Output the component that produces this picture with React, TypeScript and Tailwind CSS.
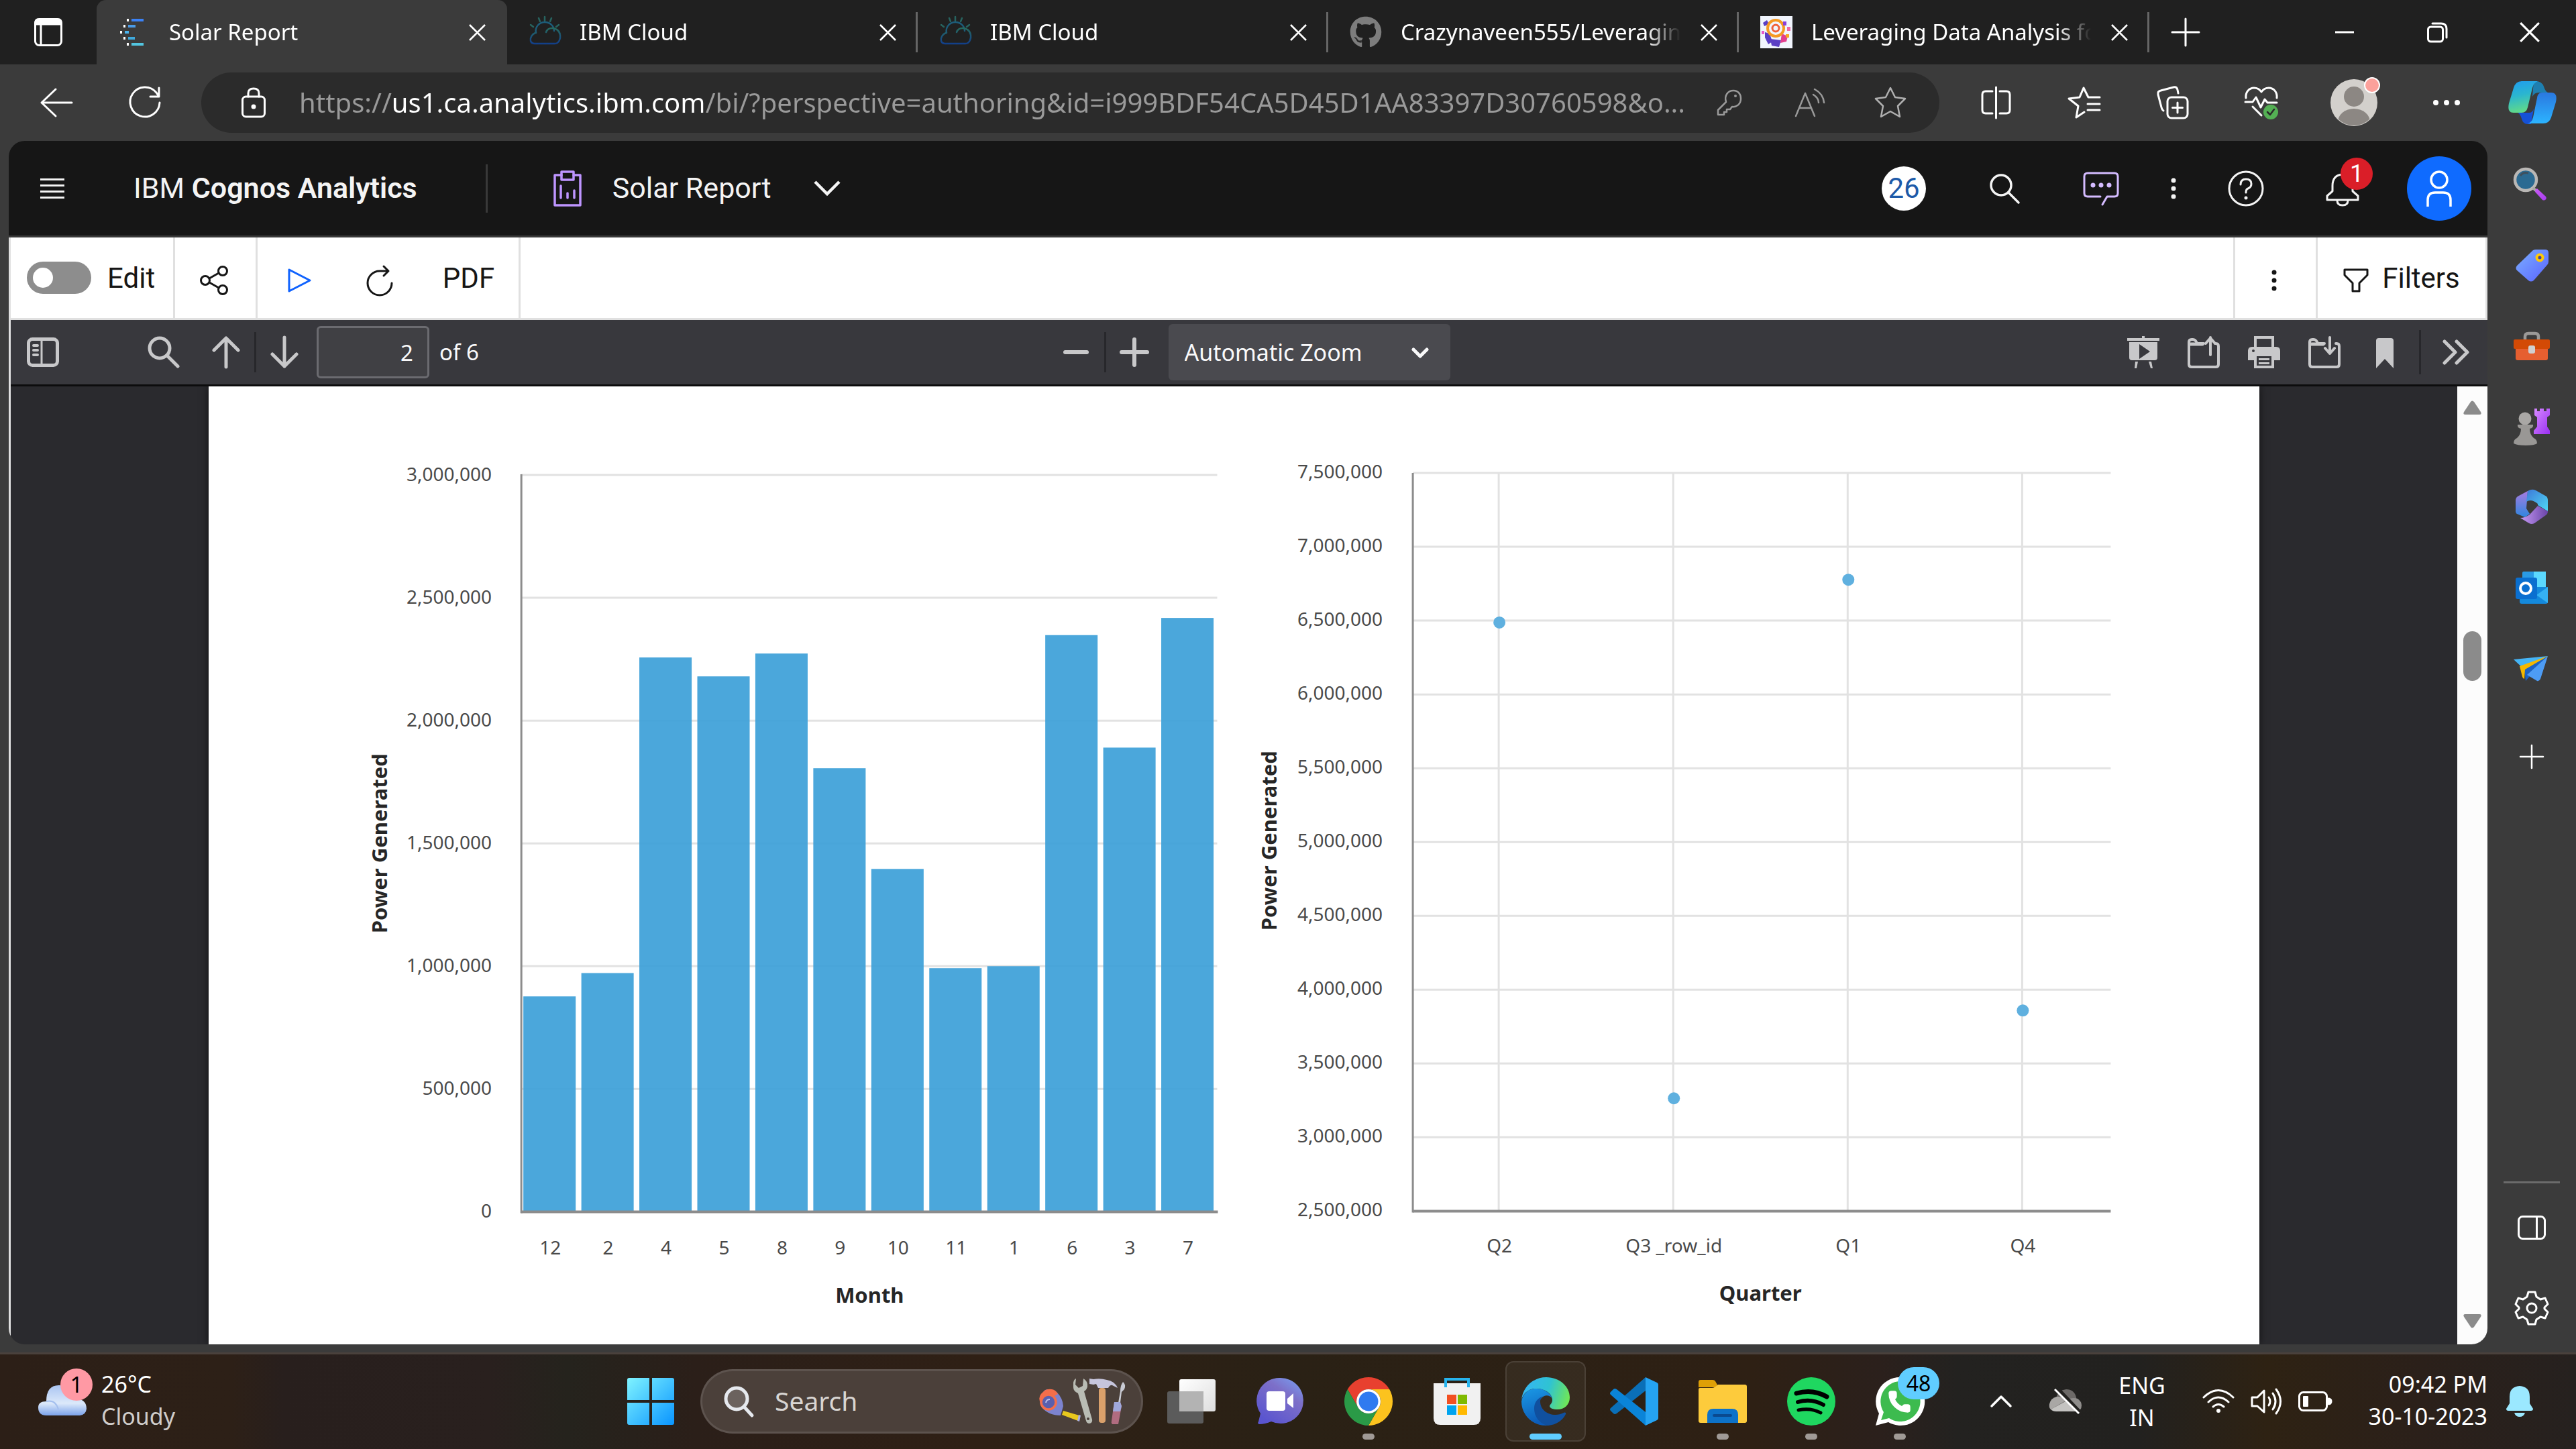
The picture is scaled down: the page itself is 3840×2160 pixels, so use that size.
import React from "react";
import { FaGithub } from "react-icons/fa";
import { Phone } from "lucide-react";

type Kids = { children?: React.ReactNode };

/* Line icon drawn in its own pixel grid */
function Line({ w, h, s = 3, c = "", children }: Kids & { w: number; h: number; s?: number; c?: string }) {
  return (
    <svg width={w} height={h} viewBox={`0 0 ${w} ${h}`} fill="none" stroke="currentColor" strokeWidth={s} strokeLinecap="round" strokeLinejoin="round" className={`shrink-0 overflow-visible ${c}`} aria-hidden="true">
      {children}
    </svg>
  );
}

/* Filled icon */
function Art({ w, h, c = "", children }: Kids & { w: number; h: number; c?: string }) {
  return (
    <svg width={w} height={h} viewBox={`0 0 ${w} ${h}`} fill="currentColor" className={`shrink-0 overflow-visible ${c}`} aria-hidden="true">
      {children}
    </svg>
  );
}

function Btn({ label, c = "", children }: Kids & { label: string; c?: string }) {
  return (
    <button type="button" aria-label={label} className={`flex shrink-0 items-center justify-center ${c}`}>
      {children}
    </button>
  );
}

const starPath = "M24 2 L31 16 L46 18 L35 29 L38 45 L24 37 L10 45 L13 29 L2 18 L17 16 Z";

/* ---------------------------------------------------------------- tabs */

const CognosFavicon = () => (
  <Art w={48} h={48}>
    {[
      [13, 4, 28, "#3b82f6"],
      [8, 13, 21, "#4a9be8"],
      [3, 22, 16, "#4ab5f0"],
      [8, 31, 20, "#3fa9dc"],
      [13, 40, 28, "#52c5e0"],
    ].map(([x, y, w, f]) => (
      <g key={y as number}>
        <rect x={x} y={y} width={3} height={4} fill="#fff" />
        <rect x={(x as number) + 7} y={y} width={(w as number) - 10} height={4} fill={f as string} />
      </g>
    ))}
  </Art>
);

const CloudFavicon = () => (
  <Line w={48} h={48} s={2.5}>
    <defs>
      <linearGradient id="ibmc" x1="0" y1="0" x2="0" y2="1">
        <stop offset="0" stopColor="#266a5e" />
        <stop offset="1" stopColor="#123f8a" />
      </linearGradient>
    </defs>
    <g stroke="#27635f">
      <path d="M24 1v6M15 3l2 5M34 3l-2 5M3 13l4 3M45 13l-4 3" />
    </g>
    <path stroke="#1d5c79" d="M11 25C9 15 17 9 24 9c8 0 14 6 14 13" />
    <path stroke="url(#ibmc)" d="M10 25c-5 2-8 7-7 12 1 3 3 4 6 4h30c6 0 9-7 8-13-1-7-7-10-12-10-5 0-8 3-9 6" />
  </Line>
);

const TargetFavicon = () => (
  <Art w={48} h={48}>
    <rect width={48} height={48} fill="#f1f5fd" />
    <path d="M4 10l6-4 3 6-7 3zM7 24l7 2 4 12-6 4-5-10zM15 34l16 2-3 10-11-2z" fill="#5b3fc4" />
    <path d="M32 26l9 4-2 8-9 2z" fill="#e23f8e" />
    <circle cx={23} cy={18} r={12} fill="none" stroke="#f59a23" strokeWidth={4} />
    <circle cx={23} cy={18} r={5} fill="none" stroke="#f0613a" strokeWidth={3} />
    <rect x={34} y={8} width={5} height={6} fill="#8b3fd6" />
    <rect x={40} y={16} width={5} height={6} fill="#f06aa0" />
    <rect x={38} y={27} width={5} height={5} fill="#f5a623" />
    <rect x={2} y={22} width={4} height={5} fill="#e857c8" />
  </Art>
);

const CloseX = ({ size = 25 }: { size?: number }) => (
  <svg width={size} height={size} viewBox="0 0 25 25" stroke="currentColor" strokeWidth={2.6} className="shrink-0" aria-hidden="true">
    <path d="M1 1L24 24M24 1L1 24" />
  </svg>
);

const tabs = [
  { title: "Solar Report", icon: <CognosFavicon /> },
  { title: "IBM Cloud", icon: <CloudFavicon /> },
  { title: "IBM Cloud", icon: <CloudFavicon /> },
  { title: "Crazynaveen555/Leveraging", icon: <FaGithub size={48} color="#7d7d7d" /> },
  { title: "Leveraging Data Analysis for", icon: <TargetFavicon /> },
];

function TabBar() {
  return (
    <header className="flex h-24 shrink-0 bg-[#202020] text-white">
      <Btn label="Tab actions menu" c="w-36">
        <Line w={42} h={42}>
          <rect x={1.5} y={1.5} width={39} height={39} rx={6} />
          <path d="M2 9V6q0-4 4-4h30q4 0 4 4v3z" fill="currentColor" />
          <path d="M10 10v30" strokeWidth={3} />
        </Line>
      </Btn>
      <nav aria-label="Tabs" className="flex min-w-0">
        {tabs.map((t, i) => (
          <div
            key={i}
            className={
              i === 0
                ? "flex w-[612px] min-w-0 items-center rounded-t-[14px] bg-[#3b3b3b] pl-8"
                : "flex w-[612px] min-w-0 items-center pl-8"
            }
          >
            {t.icon}
            <a href="#tab" className="ml-7 min-w-0 flex-1 overflow-hidden text-[33px] leading-[48px] whitespace-nowrap [mask-image:linear-gradient(to_right,black_88%,transparent)]">
              {t.title}
            </a>
            <Btn label={`Close ${t.title}`} c="w-[84px]">
              <CloseX />
            </Btn>
            <span className={i === 0 ? "w-[3px]" : "h-[60px] w-[3px] bg-[#666]"} />
          </div>
        ))}
      </nav>
      <Btn label="New tab" c="w-[108px]">
        <Line w={42} h={42}>
          <path d="M21 1v40M1 21h40" />
        </Line>
      </Btn>
      <div className="ml-auto flex">
        <Btn label="Minimize" c="w-[138px]">
          <Line w={30} h={30}>
            <path d="M1 15h28" strokeLinecap="butt" />
          </Line>
        </Btn>
        <Btn label="Restore" c="w-[138px]">
          <Line w={30} h={30}>
            <rect x={1.5} y={7} width={22} height={22} rx={4} />
            <path d="M8 2h13q8 0 8 8v13" />
          </Line>
        </Btn>
        <Btn label="Close window" c="w-[138px]">
          <CloseX size={30} />
        </Btn>
      </div>
    </header>
  );
}

/* --------------------------------------------------------- address bar */

function AddressBar() {
  return (
    <div className="flex h-[114px] shrink-0 items-center bg-[#3b3b3b] pl-[18px] text-white">
      <Btn label="Back" c="w-[132px]">
        <Line w={48} h={44}>
          <path d="M23 2L2 22l21 20M2 22h45" />
        </Line>
      </Btn>
      <Btn label="Refresh" c="w-[132px]">
        <Line w={48} h={48}>
          <path d="M46 24A22 22 0 1 1 41 9l4 6M45 2v13H32" />
        </Line>
      </Btn>
      <div className="ml-[18px] flex h-[90px] min-w-0 flex-1 items-center rounded-full bg-[#2b2b2b] pr-[13px] pl-[60px]">
        <Line w={36} h={46}>
          <rect x={1.5} y={14} width={33} height={30} rx={5} />
          <path d="M10 14V9q0-7 8-7t8 7v5" />
          <circle cx={18} cy={29} r={2} fill="currentColor" />
        </Line>
        <input
          aria-label="Address and search bar"
          readOnly
          value="https://us1.ca.analytics.ibm.com/bi/?perspective=authoring&id=i999BDF54CA5D45D1AA83397D30760598&o..."
          className="ml-[50px] min-w-0 flex-1 bg-[linear-gradient(to_right,#9a9a9a_0px,#9a9a9a_139px,#ffffff_139px,#ffffff_602px,#9a9a9a_602px)] bg-clip-text text-[40px] leading-[60px] text-transparent outline-none"
        />
        <Btn label="Saved passwords" c="w-[120px] text-[#9a9a9a]">
          <Line w={38} h={40} s={2.5}>
            <path d="M14 19C11 9 17 2 25 2c7 0 11 5 11 12 0 8-6 13-13 12l-3 4h-5v4h-4v4H2v-7z" />
            <circle cx={28} cy={10} r={2} fill="currentColor" stroke="none" />
          </Line>
        </Btn>
        <Btn label="Read aloud" c="w-[120px] text-[#9a9a9a]">
          <Line w={46} h={42} s={2.5}>
            <path d="M2 41L16 7l14 34M7 29h18M28 9q8 5 8 12M30 1q13 7 14 20" />
          </Line>
        </Btn>
        <Btn label="Add to favorites" c="w-[120px] text-[#b0b0b0]">
          <Line w={48} h={48} s={2.5}>
            <path d={starPath} />
          </Line>
        </Btn>
      </div>
      <Btn label="Split screen" c="ml-[18px] w-[132px]">
        <Line w={45} h={48}>
          <path d="M17 7H7q-5 0-5 5v23q0 5 5 5h10M28 7h10q5 0 5 5v23q0 5-5 5H28M22.500 1v46" />
        </Line>
      </Btn>
      <Btn label="Favorites" c="w-[132px]">
        <Line w={50} h={48}>
          <path d="M13 46l3-17L2 18l16-2L24 2l7 14h17M30 26h18M30 35h18M13 46l12-8" />
        </Line>
      </Btn>
      <Btn label="Collections" c="w-[132px]">
        <Line w={48} h={48}>
          <rect x={16} y={16} width={30} height={31} rx={6} />
          <path d="M31 24v15M23.500 31.500h15M10 36q-2-1-3-5L2 12q-1-5 4-6L25 1q5-1 6 4l1 5" />
        </Line>
      </Btn>
      <Btn label="Browser essentials" c="w-[132px]">
        <Line w={50} h={48}>
          <path d="M2 17C1 8 7 2 14 2q7 0 11 6 4-6 11-6c7 0 13 6 12 15M1 23h11l5-7 7 15 6-12 4 5h14M12 30l13 13" />
          <circle cx={39} cy={38} r={11} fill="#54b054" stroke="none" />
          <path d="M34 38l4 4 6-8" stroke="#2a2a2a" strokeWidth={2.5} />
        </Line>
      </Btn>
      <Btn label="Profile" c="w-[144px]">
        <Art w={70} h={70}>
          <clipPath id="pf">
            <circle cx={35} cy={35} r={34} />
          </clipPath>
          <circle cx={35} cy={35} r={35} fill="#d3d0cc" />
          <g clipPath="url(#pf)" fill="#8c8783">
            <circle cx={35} cy={26} r={15} />
            <ellipse cx={35} cy={64} rx={24} ry={20} />
          </g>
          <circle cx={62} cy={9} r={11} fill="#fba19b" stroke="#fff" strokeWidth={2} />
        </Art>
      </Btn>
      <Btn label="Settings and more" c="w-[132px]">
        <Art w={42} h={10}>
          <circle cx={5} cy={5} r={4} />
          <circle cx={21} cy={5} r={4} />
          <circle cx={37} cy={5} r={4} />
        </Art>
      </Btn>
      <Btn label="Copilot" c="w-[127px] pr-1">
        <Art w={72} h={64}>
          <defs>
            <linearGradient id="cp1" x1="0" y1="0" x2="0.200" y2="1">
              <stop offset="0" stopColor="#1f9cf0" />
              <stop offset="0.500" stopColor="#2bb6cf" />
              <stop offset="1" stopColor="#5fd98b" />
            </linearGradient>
            <linearGradient id="cp2" x1="0" y1="0" x2="0" y2="1">
              <stop offset="0" stopColor="#2a78e0" />
              <stop offset="1" stopColor="#2cb4ff" />
            </linearGradient>
          </defs>
          <path d="M38 0h3q9 0 12 8 2 7 6 9h-14q-6 0-9 6z" fill="#1e7fb0" />
          <path d="M14 47h17q5 0 7-6l-4 23h-5q-7 0-9-8-2-7-6-9z" fill="#1551d6" />
          <path d="M20 0h24q-6 2-8 10l-7 29q-2 8-9 8H8q-10 0-7-14L8 10q3-10 12-10z" fill="url(#cp1)" />
          <path d="M50 17h14q10 0 7 14l-7 23q-3 9-12 9H29q6-1 8-9l6-29q1-8 7-8z" fill="url(#cp2)" />
        </Art>
      </Btn>
    </div>
  );
}

/* ------------------------------------------------------- cognos header */

function CognosHeader() {
  return (
    <div className="flex h-[144px] shrink-0 items-center border-b-[3px] border-[#393939] bg-[#161616] font-['Roboto',sans-serif] text-[43px] text-[#f4f4f4]">
      <Btn label="Open menu" c="ml-[47px] h-24">
        <Art w={36} h={30}>
          <path d="M0 0h36v3H0zM0 9h36v3H0zM0 18h36v3H0zM0 27h36v3H0z" />
        </Art>
      </Btn>
      <h1 className="ml-[103px] whitespace-nowrap">
        IBM <span className="font-semibold">Cognos Analytics</span>
      </h1>
      <span className="ml-[102px] h-[72px] w-[3px] bg-[#393939]" />
      <button type="button" className="ml-[98px] flex items-center">
        <Line w={42} h={54} s={3.5} c="text-[#be95ff]">
          <path d="M12 7H2v45h38V7H30" />
          <rect x={12} y={2} width={18} height={12} />
          <path d="M11 23v18M21 34v7M31 30v11" />
        </Line>
        <span className="ml-[46px] whitespace-nowrap">Solar Report</span>
        <svg width={40} height={24} viewBox="0 0 40 24" fill="none" stroke="currentColor" strokeWidth={4.500} className="ml-[63px]" aria-hidden="true">
          <path d="M2 2l18 18L38 2" />
        </svg>
      </button>
      <div className="ml-auto flex items-center pr-6">
        <span className="flex size-[66px] items-center justify-center rounded-full bg-white text-[42px] text-[#1d5aa8]">26</span>
        <Btn label="Search" c="ml-[69px] w-24">
          <Line w={44} h={44} s={3.500}>
            <circle cx={17} cy={17} r={15} />
            <path d="M29 29l14 14" />
          </Line>
        </Btn>
        <Btn label="Assistant" c="ml-12 w-24">
          <Line w={54} h={50} c="text-[#d4bbff]">
            <path d="M26 37H7q-5 0-5-5V7q0-5 5-5h40q5 0 5 5v25q0 5-5 5H36l-7 12" />
            <g fill="currentColor" stroke="none">
              <circle cx={15} cy={20} r={3.500} />
              <circle cx={27} cy={20} r={3.500} />
              <circle cx={39} cy={20} r={3.500} />
            </g>
          </Line>
        </Btn>
        <Btn label="More" c="ml-[36px] w-12">
          <VerticalDots />
        </Btn>
        <Btn label="Help" c="ml-9 w-24">
          <Line w={54} h={54}>
            <circle cx={27} cy={27} r={25} />
            <path d="M19 21q0-8 8-8t8 7q0 5-5 7-3 1-3 6" />
            <circle cx={27} cy={41} r={2} fill="currentColor" stroke="none" />
            <circle cx={27} cy={41} r={1} />
          </Line>
        </Btn>
        <Btn label="Notifications, 1 new" c="relative ml-12 h-24 w-24">
          <Line w={50} h={50}>
            <path d="M25 4q15 1 15 17v8l8 7v6H2v-6l8-7v-8Q10 5 25 4zM17 43q0 7 8 7t8-7" />
          </Line>
          <span className="absolute top-0.5 left-[45px] flex size-12 items-center justify-center rounded-full bg-[#da1e28] text-[36px] text-white">1</span>
        </Btn>
        <Btn label="Account" c="ml-12 size-24 rounded-full bg-[#0f6bff] text-white">
          <Line w={38} h={54} s={3.500}>
            <circle cx={19} cy={14} r={12} />
            <path strokeLinecap="butt" d="M2 54V44q0-11 11-11h12q11 0 11 11v10" />
          </Line>
        </Btn>
      </div>
    </div>
  );
}

function VerticalDots() {
  return (
    <Art w={8} h={32}>
      <circle cx={4} cy={4} r={3.500} />
      <circle cx={4} cy={16} r={3.500} />
      <circle cx={4} cy={28} r={3.500} />
    </Art>
  );
}

function ReportToolbar() {
  return (
    <div className="flex h-[123px] shrink-0 border-b-[3px] border-[#e0e0e0] bg-white font-['Roboto',sans-serif] text-[42px] text-[#161616]">
      <label className="flex items-center border-r-[3px] border-[#e0e0e0] pr-[26px] pl-6">
        <input type="checkbox" className="peer sr-only" />
        <span className="flex h-12 w-24 items-center rounded-full bg-[#8d8d8d] px-[9px]">
          <span className="size-[30px] rounded-full bg-white" />
        </span>
        <span className="ml-6 w-[72px]">Edit</span>
      </label>
      <Btn label="Share" c="w-[123px] border-r-[3px] border-[#e0e0e0] pt-2 pr-1">
        <Line w={42} h={44}>
          <circle cx={34} cy={8} r={6.500} />
          <circle cx={8} cy={22} r={6.500} />
          <circle cx={34} cy={36} r={6.500} />
          <path d="M14 19l14-8M14 25l14 8" />
        </Line>
      </Btn>
      <div className="flex border-r-[3px] border-[#e0e0e0]">
        <Btn label="Run" c="w-[123px] pt-2">
          <Line w={34} h={36} c="text-[#0f62fe]">
            <path d="M2 2v32l31-16z" />
          </Line>
        </Btn>
        <Btn label="Refresh report" c="w-[117px] pt-2">
          <Line w={40} h={44}>
            <path d="M38 26A18 18 0 1 1 20 8h13M26 1l7 7-7 7" />
          </Line>
        </Btn>
        <button type="button" className="w-[149px]">PDF</button>
      </div>
      <Btn label="More options" c="ml-auto w-[126px] border-x-[3px] border-[#e0e0e0] pt-2 pr-1">
        <VerticalDots />
      </Btn>
      <button type="button" className="flex w-[253px] items-center justify-center gap-5 border-r-[3px] border-[#e0e0e0]">
        <span className="pt-2">
          <Line w={38} h={36}>
            <path d="M2 2h34v8L24 22v12H14V22L2 10z" />
          </Line>
        </span>
        Filters
      </button>
    </div>
  );
}

/* --------------------------------------------------------- pdf toolbar */

const FolderShape = ({ arrow }: { arrow: string }) => (
  <Line w={48} h={48} s={4}>
    <path d="M24 11H14q-2-6-6-6H6Q2 5 2 9v33q0 4 4 4h36q4 0 4-4V15q0-4-4-4h-1" />
    <path d="M3 12h19" strokeWidth={5} />
    <path d={arrow} />
  </Line>
);

function PdfToolbar() {
  return (
    <div className="flex h-[99px] shrink-0 items-center border-b-[3px] border-[#0c0c0d] bg-[#38383d] pl-[24px] text-[33px] text-[#f9f9fa]">
      <div className="flex flex-1 items-center text-[#c8c8ca]">
        <Btn label="Toggle sidebar">
          <Line w={48} h={44} s={5}>
            <rect x={2.500} y={2.500} width={43} height={39} rx={6} />
            <path d="M22 3v38" strokeWidth={3} />
            <path d="M10 12h6M10 19h6M10 26h6" strokeWidth={4} />
          </Line>
        </Btn>
        <Btn label="Find in document" c="ml-[132px]">
          <Line w={48} h={48} s={5}>
            <circle cx={18} cy={18} r={15} />
            <path d="M30 30l15 15" />
          </Line>
        </Btn>
        <Btn label="Previous page" c="ml-12">
          <Line w={42} h={48} s={5}>
            <path d="M21 46V3M3 21L21 3l18 18" />
          </Line>
        </Btn>
        <span className="ml-[21px] h-[60px] w-[3px] bg-[#27272b]" />
        <Btn label="Next page" c="ml-[21px]">
          <Line w={42} h={48} s={5}>
            <path d="M21 2v43M3 27l18 18 18-18" />
          </Line>
        </Btn>
        <input aria-label="Page" defaultValue="2" className="ml-[27px] h-[78px] w-[168px] rounded-[6px] border-[3px] border-[#6b6b70] bg-[#404044] pr-[21px] text-right text-[#f9f9fa]" />
        <span className="ml-[15px] whitespace-nowrap text-[#f9f9fa]">of 6</span>
      </div>
      <div className="flex items-center text-[#c8c8ca]">
        <Btn label="Zoom out" c="w-[84px]">
          <Line w={40} h={40} s={6}>
            <path d="M4 20h32" />
          </Line>
        </Btn>
        <span className="h-[60px] w-[3px] bg-[#27272b]" />
        <Btn label="Zoom in" c="w-[84px]">
          <Line w={44} h={44} s={6}>
            <path d="M3 22h38M22 3v38" />
          </Line>
        </Btn>
        <div className="relative ml-[9px]">
          <select aria-label="Zoom" className="h-[84px] w-[420px] appearance-none rounded-[6px] bg-[#4a4a4f] pl-6 text-[34px] text-[#f9f9fa]">
            <option>Automatic Zoom</option>
          </select>
          <svg width={26} height={16} viewBox="0 0 26 16" fill="none" stroke="#f9f9fa" strokeWidth={5} strokeLinecap="round" strokeLinejoin="round" className="pointer-events-none absolute top-[35px] right-8" aria-hidden="true">
            <path d="M3 3l10 10L23 3" />
          </svg>
        </div>
      </div>
      <div className="flex flex-1 items-center justify-end pr-[25px] text-[#c8c8ca]">
        <Btn label="Presentation mode" c="w-[90px]">
          <Art w={48} h={48}>
            <path d="M22 0h4v3h22v4H0V3h22zM3 9h42v23q0 4-4 4H7q-4 0-4-4zM18 12v22l16-11zM12 38h4l-2 10h-3zM32 38h4l2 10h-3z" fillRule="evenodd" />
          </Art>
        </Btn>
        <Btn label="Open file" c="w-[90px]">
          <FolderShape arrow="M34 28V2M27 11l7-8 7 8" />
        </Btn>
        <Btn label="Print" c="w-[90px]">
          <Art w={48} h={48}>
            <path fillRule="evenodd" d="M9 0h30v16h3q6 0 6 6v14h-9v12H9V36H0V22q0-6 6-6h3zM13 4v12h22V4zM13 30v14h22V30zM6 22a2 2 0 1 0 4 0 2 2 0 1 0-4 0z" />
            <path d="M16 33h16v3H16zM16 39h16v3H16z" />
          </Art>
        </Btn>
        <Btn label="Download" c="w-[90px]">
          <FolderShape arrow="M32 2v24M25 18l7 8 7-8" />
        </Btn>
        <Btn label="Current view" c="w-[90px]">
          <Art w={26} h={48}>
            <path d="M4 3h18q4 0 4 4v41L13 34 0 48V7q0-4 4-4z" />
          </Art>
        </Btn>
        <span className="ml-1.5 h-[66px] w-[3px] bg-[#27272b]" />
        <Btn label="Tools" c="ml-8">
          <Line w={42} h={38} s={5}>
            <path d="M3 3l16 16L3 35M21 3l16 16-16 16" />
          </Line>
        </Btn>
      </div>
    </div>
  );
}

/* -------------------------------------------------------------- charts */

const months: [string, number][] = [
  ["12", 877000], ["2", 972000], ["4", 2257000], ["5", 2180000], ["8", 2273000], ["9", 1806000],
  ["10", 1396000], ["11", 992000], ["1", 1000000], ["6", 2348000], ["3", 1890000], ["7", 2418000],
];
const quarters: [string, number][] = [
  ["Q2", 6487000], ["Q3 _row_id", 3264000], ["Q1", 6777000], ["Q4", 3859000],
];
const fmt = (n: number) => n.toLocaleString("en-US");

function ChartText({ title, x, y, side, sideY }: { title: string; x: number; y: number; side: number; sideY: number }) {
  return (
    <g fill="#262626" fontWeight={700} fontSize={31} textAnchor="middle">
      <text x={x} y={y}>{title}</text>
      <text transform={`translate(${side} ${sideY}) rotate(-90)`}>Power Generated</text>
    </g>
  );
}

function BarChart() {
  const left = 466, right = 1503, base = 1230, step = 183;
  const slot = (right - left) / months.length;
  return (
    <svg viewBox="0 0 1528 1428" className="block w-full" fontFamily="'Noto Sans', sans-serif" fontSize={28} fill="#4a4a4a" role="img" aria-label="Power generated by month">
      {[0, 1, 2, 3, 4, 5, 6].map((k) => (
        <g key={k}>
          {k > 0 && <path d={`M${left} ${base - k * step}H${right}`} stroke="#e2e2e2" strokeWidth={3} />}
          <text x={422} y={base - k * step + 9} textAnchor="end">{fmt(k * 500000)}</text>
        </g>
      ))}
      {months.map(([m, v], i) => (
        <g key={m}>
          <rect x={left + i * slot + 3} y={base - (v / 500000) * step} width={78} height={(v / 500000) * step} fill="#3c9fd8" fillOpacity={0.92} />
          <text x={left + i * slot + 43} y={1294} textAnchor="middle">{m}</text>
        </g>
      ))}
      <path d={`M${left} 131V1232`} stroke="#8c8c8c" strokeWidth={3} />
      <path d={`M${left} ${base}H${right + 1}`} stroke="#8c8c8c" strokeWidth={4} />
      <ChartText title="Month" x={985} y={1366} side={266} sideY={681} />
    </svg>
  );
}

function DotChart() {
  const left = 266, right = 1306, base = 1229, step = 110;
  return (
    <svg viewBox="0 0 1528 1428" className="block w-full" fontFamily="'Noto Sans', sans-serif" fontSize={28} fill="#4a4a4a" role="img" aria-label="Power generated by quarter">
      {Array.from({ length: 11 }, (_, k) => (
        <g key={k}>
          {k > 0 && <path d={`M${left} ${base - k * step}H${right}`} stroke="#e2e2e2" strokeWidth={3} />}
          <text x={221} y={base - k * step + 8} textAnchor="end">{fmt(2500000 + k * 500000)}</text>
        </g>
      ))}
      {quarters.map(([q, v], i) => {
        const x = 394 + i * 260;
        return (
          <g key={q}>
            <path d={`M${x} 129V${base}`} stroke="#e2e2e2" strokeWidth={3} />
            <circle cx={x + 1} cy={base - ((v - 2500000) / 500000) * step} r={9} fill="#5fb0df" />
            <text x={x + 1} y={1291} textAnchor="middle">{q}</text>
          </g>
        );
      })}
      <path d={`M${left} 129V${base + 2}`} stroke="#8c8c8c" strokeWidth={3} />
      <path d={`M${left} ${base}H${right}`} stroke="#8c8c8c" strokeWidth={4} />
      <ChartText title="Quarter" x={784} y={1363} side={63} sideY={677} />
    </svg>
  );
}

function PdfViewer() {
  return (
    <div className="flex min-h-0 flex-1 bg-[#2a2a2e]">
      <main className="flex-1 overflow-hidden px-[295px]">
        <div className="grid h-full grid-cols-2 items-start overflow-hidden bg-white shadow-[0_0_12px_rgba(0,0,0,0.6)]">
          <BarChart />
          <DotChart />
        </div>
      </main>
      <div className="flex w-[45px] shrink-0 flex-col items-center bg-[#fcfcfc] pt-[21px] pb-6 text-[#8b8b8b]">
        <Art w={27} h={21}>
          <path d="M11 2q2-3 5 0l10 15q2 4-2 4H3q-4 0-2-4z" />
        </Art>
        <span className="mt-[323px] h-[74px] w-[27px] rounded-full bg-[#8b8b8b]" />
        <Art w={27} h={21} c="mt-auto">
          <path d="M11 19q2 3 5 0L26 4q2-4-2-4H3Q-1 0 1 4z" />
        </Art>
      </div>
    </div>
  );
}

/* ------------------------------------------------------------- sidebar */

const sideIcons: [string, React.ReactNode][] = [
  ["Search", (
    <Art w={54} h={54}>
      <defs>
        <linearGradient id="hd" x1="0" y1="0" x2="1" y2="1"><stop offset="0" stopColor="#c95bf5" /><stop offset="1" stopColor="#a83cf0" /></linearGradient>
      </defs>
      <circle cx={18} cy={19} r={16} fill="#2b6a92" stroke="#b9b7b5" strokeWidth={4.500} />
      <path d="M10 13q4-6 12-4" fill="none" stroke="#3f4f5c" strokeWidth={3} />
      <path d="M29 31l4 4" stroke="#a9a7a5" strokeWidth={4} />
      <path d="M35 32l13 12q2 3-1 5-2 1-4 0L32 37q0-4 3-5z" fill="url(#hd)" />
    </Art>
  )],
  ["Shopping", (
    <Art w={54} h={54}>
      <defs>
        <linearGradient id="tg" x1="0" y1="0" x2="1" y2="1"><stop offset="0" stopColor="#7bb0ff" /><stop offset="1" stopColor="#5a63ff" /></linearGradient>
      </defs>
      <path d="M29 4q2-1 4-1h14q5 0 5 5v13q0 3-2 5L30 49q-4 3-8 0L5 34q-3-3 0-7z" fill="url(#tg)" />
      <circle cx={39} cy={15} r={4.500} fill="#43409c" stroke="#ffc905" strokeWidth={4} />
    </Art>
  )],
  ["Tools", (
    <Art w={54} h={54}>
      <path d="M17 17V13q0-5 5-5h10q5 0 5 5v4" fill="none" stroke="#9b9997" strokeWidth={4.500} />
      <rect x={3} y={25} width={48} height={23} rx={3} fill="#e65f30" />
      <rect x={0} y={17} width={54} height={14} rx={2} fill="#d34a05" />
      <rect x={22} y={26} width={10} height={12} rx={3} fill="#d0d0d0" />
    </Art>
  )],
  ["Games", (
    <Art w={54} h={58}>
      <defs>
        <linearGradient id="rk" x1="0" y1="0" x2="1" y2="1"><stop offset="0" stopColor="#d78bff" /><stop offset="1" stopColor="#9a2ff2" /></linearGradient>
      </defs>
      <path d="M31 2h4v4h4V2h6v4h4V2h5v10l-4 3v14l4 6v5H30v-5l5-6V15l-4-3z" fill="url(#rk)" />
      <circle cx={17} cy={17} r={9.500} fill="#a9a7a5" />
      <path d="M6 26h23q1 5-5 6 0 9 6 14 5 2 5 8-4 3-17 3T0 54q0-6 5-8 6-5 6-14-6-1-5-6z" fill="#999795" />
    </Art>
  )],
  ["Microsoft 365", (
    <Art w={54} h={54}>
      <defs>
        <linearGradient id="m1" x1="0" y1="0" x2="0" y2="1"><stop offset="0" stopColor="#a77ce0" /><stop offset="1" stopColor="#2f86e0" /></linearGradient>
        <linearGradient id="m2" x1="0" y1="0" x2="1" y2="1"><stop offset="0" stopColor="#3d7ad8" /><stop offset="1" stopColor="#4fd8f5" /></linearGradient>
        <linearGradient id="m3" x1="0" y1="0" x2="1" y2="0"><stop offset="0" stopColor="#c79af5" /><stop offset="1" stopColor="#6a45a8" /></linearGradient>
      </defs>
      <path d="M21 3l-2 26 5 8-7 5-12-5q-2-1-2-4V16q0-3 3-5z" fill="url(#m1)" />
      <path d="M21 3q6-4 12-1l16 9q2 2 2 5v17L36 24V22q-10-8-17-3z" fill="url(#m2)" />
      <path d="M36 25l15 8q0 4-3 6L31 51q-4 2-8 0L10 43q7 0 14-5z" fill="url(#m3)" />
    </Art>
  )],
  ["Outlook", (
    <Art w={54} h={54}>
      <rect x={13} y={3} width={35} height={30} rx={2} fill="#2a9be5" />
      <rect x={30} y={3} width={18} height={24} fill="#5bd9ff" />
      <path d="M9 26h42v22q0 3-3 3H12q-3 0-3-3z" fill="#1489dc" />
      <path d="M51 26v24L34 38z" fill="#35b1f2" />
      <rect x={3} y={12} width={32} height={32} rx={3} fill="#0a6fd0" />
      <circle cx={18} cy={28} r={8} fill="none" stroke="#fff" strokeWidth={4} />
    </Art>
  )],
  ["Drop", (
    <Art w={54} h={54}>
      <path d="M0 14l51-5L16 29z" fill="#45b4f5" />
      <path d="M16 29l2 17 33-37z" fill="#1c62c4" />
      <path d="M20 37L51 9 40 43q-2 4-5 3z" fill="#4d9cf5" />
      <path d="M9 24L51 9 17 29l-1 14q-2 0-3-3z" fill="#f5b800" />
    </Art>
  )],
];

function Sidebar() {
  return (
    <aside className="flex w-[132px] shrink-0 flex-col items-center bg-[#3b3b3b] pt-1.5 pb-1.5 text-white">
      {sideIcons.map(([n, el]) => (
        <Btn key={n} label={n} c="h-[120px] w-full">
          {el}
        </Btn>
      ))}
      <Btn label="Customize" c="mt-3 h-[120px] w-full">
        <Line w={36} h={36} s={2.500}>
          <path d="M18 1v34M1 18h34" />
        </Line>
      </Btn>
      <hr className="mt-auto w-[84px] border-t-[3px] border-[#6b6b6b]" />
      <Btn label="Hide sidebar" c="mt-1.5 h-[120px] w-full">
        <Line w={42} h={36}>
          <rect x={1.500} y={1.500} width={39} height={33} rx={6} />
          <path d="M28.500 2v32" />
        </Line>
      </Btn>
      <Btn label="Settings" c="h-[120px] w-full">
        <Line w={50} h={52}>
          <path d="M20 2h10l2 7 6 4 7-2 4 9-5 5v2l5 5-4 9-7-2-6 4-2 7H20l-2-7-6-4-7 2-4-9 5-5v-2l-5-5 4-9 7 2 6-4z" />
          <circle cx={25} cy={26} r={7} />
        </Line>
      </Btn>
    </aside>
  );
}

/* ------------------------------------------------------------- taskbar */

const SearchTools = () => (
  <Art w={130} h={68}>
    <path d="M51 6q1-5 4-6l-1 9 5 5 6-3 1-11q7 4 6 12-1 5-5 7l12 42q1 5-4 6-4 0-5-4L58 22q-7-3-7-9z" fill="#b9bcb4" />
    <circle cx={73} cy={60} r={2} fill="#4c413d" />
    <path d="M75 0l6 1q10-2 20 1 12 2 16 12l-8-4q-3-1-6 4H88l-3-6-4 1-6-1z" fill="#c6c5dd" />
    <rect x={89} y={14} width={10} height={52} rx={4} fill="#d9a06b" />
    <path d="M125 5q5 4 2 11l-4 4-2 16h-3l3-17q0-9 4-14z" fill="#c9cbd4" />
    <path d="M112 35h9l2 6-5 27h-9q-2-2-1-5z" fill="#b06c80" />
    <path d="M112 35h9l2 6-2 8h-11z" fill="#9fa8dc" />
    <path d="M9 17q10-3 18 4 8 8 9 20l-4 14q-18 0-28-12-8-14 5-26z" fill="#7c83cf" />
    <path d="M7 19q4-4 12-3 6 1 9 7l-5 3q-6-5-12-2t-6 12q-2 2-4-2-3-8 6-15z" fill="#f56e4a" />
    <circle cx={14} cy={35} r={11} fill="#5a5fae" stroke="#f56e4a" strokeWidth={3.500} />
    <path d="M10 36q1-5 6-5" fill="none" stroke="#bcc0ec" strokeWidth={2} />
    <path d="M36 48l24 7-2 8-24-9z" fill="#e8c81e" />
    <path d="M59 54l3 1-2 9-3-1z" fill="#a9aee5" />
  </Art>
);

function TaskSlot({ label, dot, active, children }: Kids & { label: string; dot?: boolean; active?: boolean }) {
  return (
    <button type="button" aria-label={label} className="flex h-full w-[132px] shrink-0 items-center justify-center">
      <span
        className={
          active
            ? "relative flex size-[120px] items-center justify-center rounded-[12px] border-[2px] border-white/10 bg-white/5"
            : "relative flex size-[120px] items-center justify-center"
        }
      >
        {children}
        {dot && <span className="absolute bottom-[3px] h-[9px] w-[18px] rounded-full bg-[#a09a96]" />}
        {active && <span className="absolute bottom-[1px] h-[9px] w-12 rounded-full bg-[#60cdff]" />}
      </span>
    </button>
  );
}

function Taskbar() {
  return (
    <footer className="flex h-[144px] shrink-0 items-center border-t-[3px] border-[#4a413c] bg-[linear-gradient(to_right,#2c1f17_0%,#2d2017_9%,#281f1d_11%,#29201e_19%,#25231d_22%,#2b1f19_27%,#2f2015_38%,#2a2115_50%,#2e2014_68%,#2b201c_73%,#232220_76%,#22211f_83%,#2e2213_88%,#2b201a_94%,#26211f_100%)] pb-0.5 text-white">
      <button type="button" className="flex w-[904px] items-center pl-[57px] text-left text-[34px] leading-[48px]">
        <span className="relative mr-[22px] block">
          <Art w={72} h={60}>
            <defs>
              <linearGradient id="wc" x1="0" y1="0" x2="0" y2="1"><stop offset="0" stopColor="#a9c4f2" /><stop offset="0.600" stopColor="#dce9fa" /><stop offset="1" stopColor="#7ba2ea" /></linearGradient>
            </defs>
            <path d="M12 30Q12 5 32 6q16 1 22 20 18 0 18 15-1 9-10 10H12Q0 51 0 39q0-9 12-9z" fill="url(#wc)" />
            <path d="M12 30q14-3 18 12" fill="none" stroke="#a4bfee" strokeWidth={2} />
          </Art>
          <span className="absolute -top-[19px] left-[33px] flex size-12 items-center justify-center rounded-full bg-[#ff99a4] text-[33px] text-black">1</span>
        </span>
        <span className="pb-1">
          26°C
          <br />
          <span className="text-[#cfccca]">Cloudy</span>
        </span>
      </button>

      <TaskSlot label="Start">
        <Art w={70} h={70}>
          <defs>
            <linearGradient id="wn" gradientUnits="userSpaceOnUse" x1="0" y1="0" x2="70" y2="70"><stop offset="0" stopColor="#7ff3ff" /><stop offset="1" stopColor="#0a95ff" /></linearGradient>
          </defs>
          <path fill="url(#wn)" d="M3 0h30v33H0V3q0-3 3-3zM37 0h30q3 0 3 3v30H37zM0 37h33v33H3q-3 0-3-3zM37 37h33v30q0 3-3 3H37z" />
        </Art>
      </TaskSlot>
      <div className="mr-1.5 ml-2 flex h-24 w-[660px] items-center rounded-full border-[3px] border-white/10 bg-[#4b403a] pr-[22px] pl-8">
        <Line w={44} h={46} s={5} c="text-[#e6e9ee]">
          <circle cx={19} cy={19} r={16} fill="#6b625e" />
          <path d="M31 32l11 12" />
        </Line>
        <input aria-label="Search" placeholder="Search" className="ml-8 min-w-0 flex-1 text-[39px] outline-none placeholder:text-[#d8d5d2]" />
        <SearchTools />
      </div>
      <TaskSlot label="Task view">
        <Art w={72} h={66}>
          <defs>
            <linearGradient id="tv" x1="0" y1="0" x2="1" y2="1"><stop offset="0" stopColor="#fff" /><stop offset="1" stopColor="#dedede" /></linearGradient>
          </defs>
          <rect x={0} y={18} width={54} height={48} rx={3} fill="#5b5b5b" />
          <rect x={18} y={0} width={54} height={48} rx={3} fill="url(#tv)" />
          <rect x={18} y={18} width={36} height={30} fill="#b3b3b3" />
        </Art>
      </TaskSlot>
      <TaskSlot label="Chat">
        <Art w={68} h={70}>
          <defs>
            <linearGradient id="ch" x1="1" y1="0" x2="0.300" y2="1"><stop offset="0" stopColor="#78a4f5" /><stop offset="0.400" stopColor="#7d6fc8" /><stop offset="1" stopColor="#5a55cf" /></linearGradient>
          </defs>
          <path d="M34 0a34 34 0 1 1-13 65Q12 69 3 69q-3-1-1-4l3-12A34 34 0 0 1 34 0z" fill="url(#ch)" />
          <rect x={14} y={20} width={28} height={29} rx={4} fill="#fff" />
          <path d="M45 31l9-8v22l-9-7z" fill="#fff" />
        </Art>
      </TaskSlot>
      <TaskSlot label="Google Chrome" dot>
        <Art w={72} h={72}>
          <path d="M36 18H67.200A36 36 0 0 0 4.800 18L20.400 45A18 18 0 0 1 36 18" fill="#e8402f" />
          <path d="M67.200 18H36A18 18 0 0 1 51.600 45L36 72A36 36 0 0 0 67.200 18" fill="#fcc31e" />
          <path d="M4.800 18L20.400 45A18 18 0 0 0 51.600 45L36 72A36 36 0 0 1 4.800 18" fill="#2a9a47" />
          <circle cx={36} cy={36} r={18} fill="#fff" />
          <circle cx={36} cy={36} r={14.500} fill="#2f7af0" />
        </Art>
      </TaskSlot>
      <TaskSlot label="Microsoft Store">
        <Art w={70} h={70}>
          <path d="M0 8h70v52q0 10-10 10H10Q0 70 0 60z" fill="#f1f1f1" />
          <path d="M18 14V2h34v12" fill="none" stroke="#27b4ee" strokeWidth={4} />
          <path d="M20 25h14v14H20z" fill="#f25022" />
          <path d="M36 25h14v14H36z" fill="#7fba00" />
          <path d="M20 41h14v14H20z" fill="#00a4ef" />
          <path d="M36 41h14v14H36z" fill="#ffb900" />
        </Art>
      </TaskSlot>
      <TaskSlot label="Microsoft Edge" active>
        <Art w={72} h={72}>
          <defs>
            <linearGradient id="e1" x1="0" y1="0.300" x2="1" y2="0.500"><stop offset="0" stopColor="#35b5f5" /><stop offset="0.550" stopColor="#2fc3d2" /><stop offset="1" stopColor="#6ee65a" /></linearGradient>
            <linearGradient id="e2" x1="0" y1="0" x2="0.300" y2="1"><stop offset="0" stopColor="#1b9ae6" /><stop offset="1" stopColor="#0c5bb8" /></linearGradient>
          </defs>
          <path d="M0 34C2 14 18 0 37 0c20 0 35 14 35 30 0 11-8 18-18 18-7 0-12-2-12-5 0-2 4-4 4-9 0-9-10-17-24-17C10 17 2 25 0 34z" fill="url(#e1)" />
          <path d="M0 36c2-11 10-19 22-19 14 0 22 8 24 15-2-4-8-6-12-4-6 3-8 8-8 16 1 14 12 22 24 22-4 4-9 6-14 6C16 72 0 56 0 36z" fill="url(#e2)" />
          <path d="M34 28c-10 2-15 10-15 18 0 14 9 24 21 26 12-1 22-8 26-17 1-2-1-3-3-2-4 2-8 3-12 3-13 0-23-8-23-20 0-4 2-7 6-8z" fill="#10509f" />
        </Art>
      </TaskSlot>
      <TaskSlot label="Visual Studio Code">
        <Art w={72} h={72}>
          <path d="M53 0v20L10 54q-3 2-5 0l-4-4q-2-2 0-4z" fill="#0a6fb8" />
          <path d="M53 72V52L10 18q-3-2-5 0l-4 4q-2 2 0 4z" fill="#0a84d8" />
          <path d="M53 0l17 8q2 1 2 3v50q0 2-2 3l-17 8z" fill="#25a3f2" />
        </Art>
      </TaskSlot>
      <TaskSlot label="File Explorer" dot>
        <Art w={72} h={64}>
          <path d="M0 3q0-3 3-3h18q3 0 4 2l5 9H0z" fill="#dfa006" />
          <path d="M0 14q0-2 2-2h18q4 0 9-5h40q3 0 3 3v51q0 3-3 3H3q-3 0-3-3z" fill="#fdcb3c" />
          <path d="M13 64V52q0-9 9-9h28q9 0 9 9v12z" fill="#0d72c8" />
          <rect x={21} y={51} width={29} height={4} rx={2} fill="#0a4a8f" />
        </Art>
      </TaskSlot>
      <TaskSlot label="Spotify" dot>
        <Art w={72} h={72}>
          <circle cx={36} cy={36} r={36} fill="#1fd760" />
          <g fill="none" stroke="#000" strokeLinecap="round">
            <path d="M14 24q24-7 45 5" strokeWidth={7} />
            <path d="M16 37q20-6 38 4" strokeWidth={6} />
            <path d="M17 49q18-4 33 4" strokeWidth={5} />
          </g>
        </Art>
      </TaskSlot>
      <TaskSlot label="WhatsApp, 48 unread" dot>
        <Art w={72} h={72}>
          <path d="M36 0a36 36 0 1 1-17 67L0 72l5-18A36 36 0 0 1 36 0z" fill="#fff" />
          <path d="M36 6a30 30 0 1 1-16 55L8 64l4-12A30 30 0 0 1 36 6z" fill="#3dbb4f" />
          <Phone x={17} y={18} width={37} height={37} fill="#fff" stroke="#fff" strokeWidth={1} />
        </Art>
        <span className="absolute top-[9px] right-[1px] flex h-12 w-[62px] items-center justify-center rounded-full bg-[#60cdff] text-[32px] text-black">48</span>
      </TaskSlot>

      <div className="ml-auto flex h-full items-center pr-16 text-[34px] leading-[48px]">
        <Btn label="Show hidden icons" c="w-24">
          <Line w={32} h={18} s={3.500}>
            <path d="M2 16L16 2l14 14" />
          </Line>
        </Btn>
        <Btn label="OneDrive, not signed in" c="w-24">
          <Art w={48} h={38}>
            <path d="M10 14q3-12 15-13 12 0 15 12l2 17H2z" fill="#6d6a68" />
            <path d="M24 18q10-6 18-3 6 4 6 10 0 9-9 9H12z" fill="#8f8d8b" />
            <path d="M11 12q9-1 13 6L2 31q-3-3-2-8 2-9 11-11z" fill="#a9a7a5" />
            <path d="M2 31l22-12 17 14-3 1H10q-5 0-8-3z" fill="#c4c3c1" />
            <path d="M12 0l35 37" stroke="#232220" strokeWidth={6} />
            <path d="M8 1l36 36" stroke="#fff" strokeWidth={3} />
          </Art>
        </Btn>
        <button type="button" aria-label="Input language" className="w-[132px] text-center">
          ENG
          <br />
          IN
        </button>
        <button type="button" aria-label="Network, volume and battery" className="mx-3 flex">
          <span className="flex w-[72px] items-center justify-center">
            <Line w={48} h={36}>
              <path d="M2 12q22-21 44 0M9 19q15-14 30 0M16 26q8-7 16 0" />
              <circle cx={24} cy={32} r={3} fill="currentColor" stroke="none" />
            </Line>
          </span>
          <span className="flex w-[72px] items-center justify-center">
            <Line w={48} h={40}>
              <path d="M2 14h8L20 4v32l-10-9H2zM27 14q4 6 0 12M33 8q8 12 0 24M38 2q13 18 0 36" />
            </Line>
          </span>
          <span className="flex w-[72px] items-center justify-center">
            <Line w={50} h={30}>
              <rect x={1.500} y={1.500} width={41} height={27} rx={6} />
              <rect x={7} y={7} width={8} height={16} rx={1} fill="currentColor" stroke="none" />
              <path d="M44 11q5 0 5 4t-5 4z" fill="currentColor" />
            </Line>
          </span>
        </button>
        <button type="button" className="w-[209px] pb-1 text-right whitespace-nowrap">
          09:42 PM
          <br />
          30-10-2023
        </button>
        <Btn label="Notifications" c="ml-7">
          <Art w={40} h={46} c="text-[#9be8ff]">
            <path d="M20 0q15 1 15 16v10l5 8q0 3-3 3H3q-3 0-3-3l5-8V16Q5 1 20 0zM12 40h16q-2 6-8 6t-8-6z" />
          </Art>
        </Btn>
      </div>
    </footer>
  );
}

export default function App() {
  return (
    <div className="flex h-screen flex-col overflow-hidden bg-[#3b3b3b] font-['Noto_Sans',sans-serif]">
      <TabBar />
      <AddressBar />
      <div className="flex min-h-0 flex-1 pl-[13px]">
        <div className="mb-3 flex min-w-0 flex-1 flex-col overflow-hidden rounded-[24px]">
          <CognosHeader />
          <div className="flex min-h-0 flex-1 flex-col border-l-[3px] border-[#e0e0e0]">
            <ReportToolbar />
            <PdfToolbar />
            <PdfViewer />
          </div>
        </div>
        <Sidebar />
      </div>
      <Taskbar />
    </div>
  );
}
